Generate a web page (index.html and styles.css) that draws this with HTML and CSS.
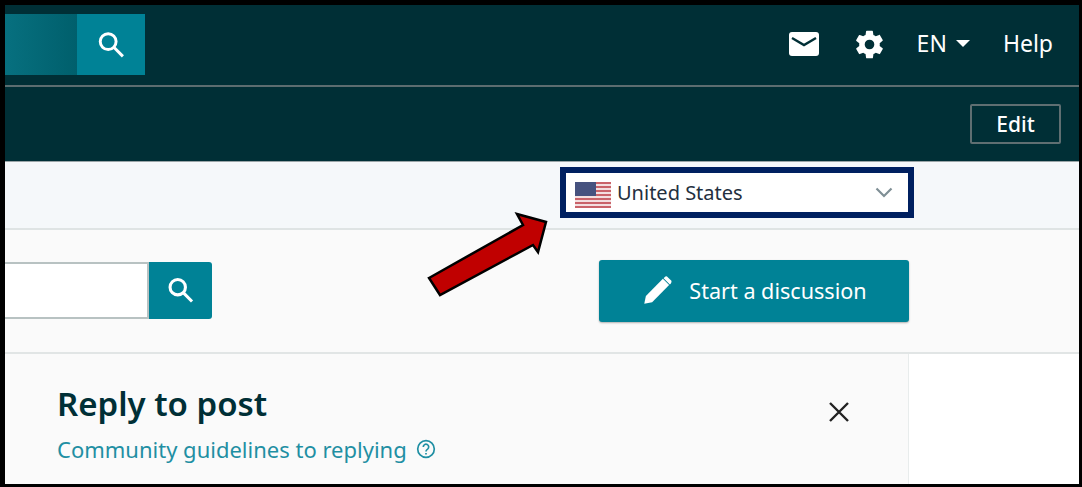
FILE: index.html
```html
<!DOCTYPE html>
<html lang="en">
<head>
    <meta charset="UTF-8">
    <title>Community forum</title>
    <link rel="stylesheet" href="styles.css">
</head>
<body>
    <div class="frame">
        <header class="topbar">
            <div class="top-search">
                <div class="top-search-field"></div>
                <button class="top-search-btn">
                    <svg width="34" height="34" viewBox="0 0 30 30" fill="none" stroke="#fff" stroke-width="2.6"><circle cx="12.5" cy="12" r="7"/><path d="M17.5 17l8 8"/></svg>
                </button>
            </div>
            <nav class="top-nav">
                <svg class="mail" width="30" height="24" viewBox="0 0 30 24"><path fill="#fff" d="M3 0h24a3 3 0 0 1 3 3v18a3 3 0 0 1-3 3H3a3 3 0 0 1-3-3V3a3 3 0 0 1 3-3z"/><path d="M3 6l12 7 12-7" fill="none" stroke="#002f36" stroke-width="2.4"/></svg>
                <svg class="gear" width="33" height="33" viewBox="0 0 24 24"><path fill="#fff" d="M19.4 13c.04-.32.07-.65.07-1s-.03-.68-.07-1l2.1-1.65c.2-.15.25-.43.12-.66l-2-3.46c-.12-.22-.39-.3-.61-.22l-2.49 1c-.52-.4-1.08-.73-1.69-.98l-.38-2.65A.49.49 0 0 0 14 2h-4c-.25 0-.46.18-.49.42l-.38 2.65c-.61.25-1.17.59-1.69.98l-2.49-1a.5.5 0 0 0-.61.22l-2 3.46c-.13.22-.07.5.12.66L4.57 11c-.04.32-.07.66-.07 1s.03.68.07 1l-2.11 1.65c-.19.15-.25.43-.12.66l2 3.46c.12.22.39.3.61.22l2.49-1c.52.4 1.08.73 1.69.98l.38 2.65c.03.24.24.42.49.42h4c.25 0 .46-.18.49-.42l.38-2.65c.61-.25 1.17-.59 1.69-.98l2.49 1c.23.09.49 0 .61-.22l2-3.46c.12-.22.07-.5-.12-.66L19.4 13zM12 15.5a3.5 3.5 0 1 1 0-7 3.5 3.5 0 0 1 0 7z"/></svg>
                <span class="lang">EN<span class="caret"></span></span>
                <span class="help">Help</span>
            </nav>
        </header>

        <div class="subbar">
            <button class="edit-btn">Edit</button>
        </div>

        <div class="filterbar">
            <div class="country">
                <svg class="flag" width="36" height="26" viewBox="0 0 36 26">
                    <rect width="36" height="26" fill="#f3dfe0"/>
                    <path d="M0 1h36M0 5h36M0 9h36M0 13h36M0 17h36M0 21h36M0 25h36" stroke="#c9636a" stroke-width="2"/>
                    <rect width="21" height="14" fill="#46527f"/>
                </svg>
                <span class="country-name">United States</span>
                <svg class="chevron" width="18" height="11" viewBox="0 0 18 11" fill="none" stroke="#7f8f95" stroke-width="2.2"><path d="M1.5 1.5L9 9l7.5-7.5"/></svg>
            </div>
        </div>

        <div class="toolbar">
            <div class="search">
                <div class="search-input"></div>
                <button class="search-btn">
                    <svg width="33" height="33" viewBox="0 0 30 30" fill="none" stroke="#fff" stroke-width="2.8"><circle cx="12.5" cy="12" r="7"/><path d="M17.5 17l8 8"/></svg>
                </button>
            </div>
            <button class="start-btn">
                <svg width="30" height="30" viewBox="0 0 24 24"><path fill="#fff" d="M1 23l1.3-6.3L15.9 3l5 5L7.3 21.700z"/><path fill="#fff" d="M17.300 1.700a1.800 1.800 0 0 1 2.500 0l2.500 2.500a1.800 1.800 0 0 1 0 2.500l-.8.8-5-5z"/></svg>
                Start a discussion
            </button>
        </div>

        <div class="content">
            <section class="reply">
                <div>
                    <h2>Reply to post</h2>
                    <a class="guidelines">Community guidelines to replying
                        <svg width="20" height="20" viewBox="0 0 20 20" fill="none" stroke="#1f8fa3" stroke-width="1.700"><circle cx="10" cy="10" r="8.300"/><path d="M7.300 8a2.700 2.700 0 1 1 4.300 2.100c-1 .7-1.600 1.200-1.600 2.300"/><path d="M10 14v1.600"/></svg>
                    </a>
                </div>
                <svg class="close" width="22" height="22" viewBox="0 0 22 22" fill="none" stroke="#222" stroke-width="2.400"><path d="M2 2l18 18M20 2L2 20"/></svg>
            </section>
            <aside class="side"></aside>
        </div>

        <!-- annotation drawn on top of the screenshot -->
        <svg class="arrow" width="130" height="95" viewBox="0 0 130 95">
            <path d="M4 73L98 20 92 9 121 17 113 47 108 40 15 90z" fill="#c00000" stroke="#000" stroke-width="2.500"/>
        </svg>
    </div>
</body>
</html>
```

FILE: styles.css
```css
* {
    box-sizing: border-box;
}
html, body {
    margin: 0;
    height: 100%;
}
body {
    font-family: "Noto Sans", "Open Sans", sans-serif;
    background: #000;
    overflow: hidden;
}
button {
    font-family: inherit;
    padding: 0;
    border: none;
    cursor: pointer;
}
.frame {
    position: relative;
    width: 1082px;
    height: 487px;
    border-style: solid;
    border-color: #000;
    border-width: 5px 3px 3px 5px;
    display: flex;
    flex-direction: column;
    background: #fff;
}
.topbar {
    height: 82px;
    flex: none;
    display: flex;
    justify-content: space-between;
    background: #002f36;
    border-bottom: 2px solid #5c6d70;
    padding: 9px 26px 0 0;
}
.top-search {
    display: flex;
    height: 61px;
}
.top-search-field {
    width: 72px;
    background: linear-gradient(90deg, #07707f, #005f6c);
}
.top-search-btn {
    width: 68px;
    background: #008296;
    display: flex;
    align-items: center;
    justify-content: center;
}
.top-nav {
    display: flex;
    align-items: center;
    height: 60px;
    color: #fff;
    font-size: 23px;
}
.mail {
    margin-right: 34px;
}
.gear {
    margin-right: 31px;
}
.lang {
    display: flex;
    align-items: center;
    margin-right: 33px;
    padding-bottom: 2px;
}
.help {
    padding-bottom: 2px;
}
.caret {
    margin-left: 9px;
    border-left: 7px solid transparent;
    border-right: 7px solid transparent;
    border-top: 7px solid #fff;
}
.subbar {
    height: 75px;
    flex: none;
    display: flex;
    justify-content: flex-end;
    align-items: center;
    padding-right: 18px;
    background: #002f36;
    border-bottom: 1px solid #9aa5a7;
}
.edit-btn {
    width: 91px;
    height: 40px;
    color: #fff;
    font-size: 21px;
    font-weight: 500;
    background: transparent;
    border: 2px solid #5f6f72;
    border-radius: 2px;
}
.filterbar {
    height: 68px;
    flex: none;
    display: flex;
    padding: 11px 0 0 561px;
    background: #f5f8fa;
    border-bottom: 2px solid #dfe4e4;
}
.country {
    width: 342px;
    height: 39px;
    display: flex;
    align-items: center;
    padding: 0 15px 0 9px;
    background: #fff;
    outline: 6px solid #002060;
}
.flag {
    flex: none;
    margin: 4px 6px 0 0;
}
.country-name {
    color: #232f3e;
    font-size: 20px;
    flex: 1;
}
.toolbar {
    height: 124px;
    flex: none;
    display: flex;
    justify-content: space-between;
    padding: 30px 170px 0 0;
    background: #fafafa;
    border-bottom: 2px solid #e1e5e5;
}
.search {
    display: flex;
    height: 57px;
    margin-top: 2px;
}
.search-input {
    width: 144px;
    background: #fff;
    border: 2px solid #b8c2c2;
    border-left: none;
}
.search-btn {
    width: 63px;
    background: #008296;
    border-radius: 0 3px 3px 0;
    display: flex;
    align-items: center;
    justify-content: center;
}
.start-btn {
    width: 310px;
    height: 62px;
    display: flex;
    align-items: center;
    justify-content: center;
    gap: 16px;
    padding: 0 0 2px 2px;
    color: #fff;
    font-size: 21.6px;
    background: #008296;
    border-radius: 3px;
    box-shadow: 0 1px 2px rgba(0, 0, 0, 0.3);
}
.content {
    flex: 1;
    display: flex;
    min-height: 0;
}
.reply {
    width: 904px;
    display: flex;
    justify-content: space-between;
    align-items: flex-start;
    padding: 28px 58px 0 52px;
    background: #fafafa;
    border-right: 1px solid #e8ecec;
}
.reply h2 {
    margin: 0 0 8px;
    color: #002f36;
    font-size: 33px;
    line-height: 44px;
    font-weight: 600;
}
.guidelines {
    display: flex;
    align-items: center;
    gap: 9px;
    color: #1f8fa3;
    font-size: 22px;
    line-height: 30px;
}
.close {
    margin-top: 19px;
}
.side {
    flex: 1;
    background: #fff;
}
.arrow {
    position: absolute;
    left: 420px;
    top: 200px;
}
```
